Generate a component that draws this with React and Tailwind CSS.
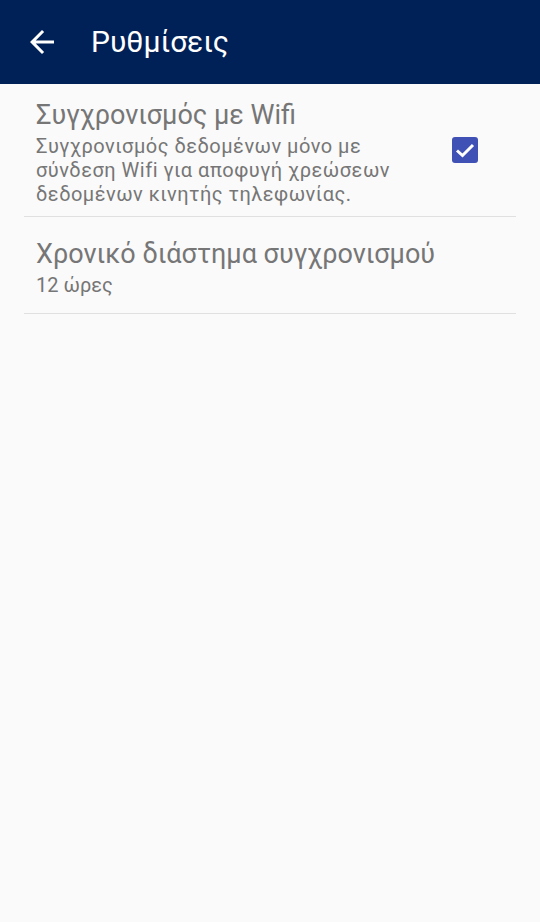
export default function App() {
  return (
    <div className="min-h-[922px] bg-[#fafafa] font-['Roboto',sans-serif]">
      {/* TOOLBAR */}
      <header className="h-[84px] bg-[#002157] flex items-center">
        <div className="w-[84px] flex items-center justify-center">
          <svg width="36" height="36" viewBox="0 0 24 24" fill="#ffffff">
            <path d="M20 11H7.83l5.59-5.59L12 4l-8 8 8 8 1.41-1.41L7.83 13H20v-2z" />
          </svg>
        </div>
        <h1 className="pl-[7px] text-[30px] text-white leading-none">Ρυθμίσεις</h1>
      </header>

      {/* PREFERENCES */}
      <section className="px-6">
        <div className="flex items-start border-b border-[#e0e0e0] pt-[18px] pb-[10px]">
          <div className="flex-1 pl-3 pr-[21px] text-[#767676]">
            <div className="text-[27px] leading-[27px]">Συγχρονισμός με Wifi</div>
            <div className="mt-[5px] text-[20px] leading-[24px] tracking-[0.5px]">
              Συγχρονισμός δεδομένων μόνο με σύνδεση Wifi για αποφυγή χρεώσεων δεδομένων κινητής τηλεφωνίας.
            </div>
          </div>
          <div className="mt-[35px] w-[26px] h-[26px] rounded-[3px] bg-[#3f51b5] mr-[38px]">
            <svg width="26" height="26" viewBox="0 0 26 26" fill="none" stroke="#ffffff" strokeWidth="3">
              <path d="M5 13.5L10.5 18.5L21 8" />
            </svg>
          </div>
        </div>

        <div className="border-b border-[#e0e0e0] pl-3 pt-[24px] pb-[18px] text-[#767676]">
          <div className="text-[27px] leading-[27px]">Χρονικό διάστημα συγχρονισμού</div>
          <div className="mt-[7px] text-[20px] leading-[20px]">12 ώρες</div>
        </div>
      </section>
    </div>
  );
}
